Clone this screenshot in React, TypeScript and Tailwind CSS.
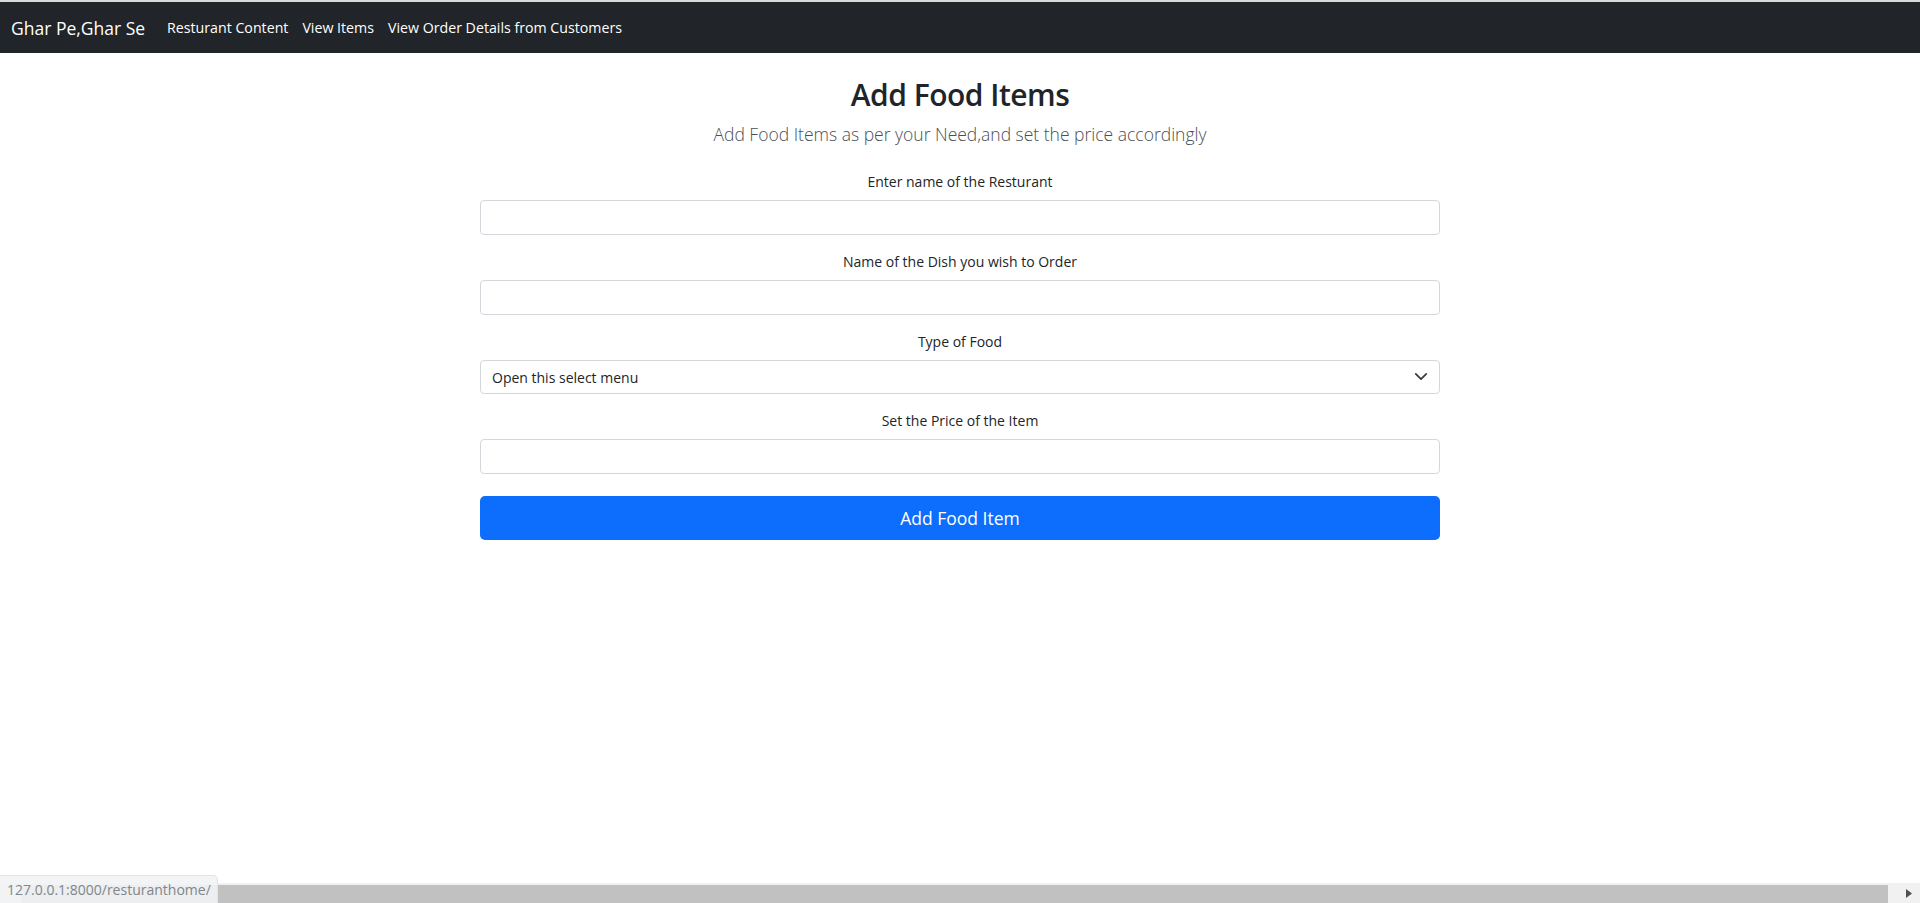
import React from "react";

function Field({ label, children }: { label: string; children: React.ReactNode }) {
  return (
    <div className="mb-[16px] flex flex-col">
      <label className="mb-[8px] block h-[21px] text-center text-[14px] leading-[21px] text-[#212529]">{label}</label>
      {children}
    </div>
  );
}

function TextInput() {
  return (
    <input
      type="text"
      className="box-border block h-[35px] w-full rounded-[4px] border border-[#d3d7dc] bg-white px-[11px] text-[14px] text-[#212529] outline-none"
    />
  );
}

export default function App() {
  return (
    <div
      className="relative flex h-[903px] w-full flex-col overflow-hidden bg-white"
      style={{ fontFamily: '"Open Sans", "Noto Sans", sans-serif' }}
    >
      <div className="h-[2px] w-full bg-[#dadada]" />
      <nav className="flex h-[51px] items-center bg-[#212529] pl-[11px] text-white">
        <span className="mr-[15px] text-[17.5px] leading-[26px] text-white">Ghar Pe,Ghar Se</span>
        <a className="px-[7px] text-[14.2px] leading-[21px] text-white">Resturant Content</a>
        <a className="px-[7px] text-[14.2px] leading-[21px] text-white">View Items</a>
        <a className="px-[7px] text-[14.2px] leading-[21px] text-white">View Order Details from Customers</a>
      </nav>

      <main className="flex-1">
        <div className="mx-auto w-[960px] pt-[24px]">
          <h2 className="text-center text-[30px] font-semibold leading-[36px] tracking-[-0.5px] text-[#212529]">
            Add Food Items
          </h2>
          <p className="mt-[8px] text-center text-[17.5px] font-light leading-[26px] text-[#495057]">
            Add Food Items as per your Need,and set the price accordingly
          </p>
          <form className="mt-[24px]">
            <Field label="Enter name of the Resturant">
              <TextInput />
            </Field>
            <Field label="Name of the Dish you wish to Order">
              <TextInput />
            </Field>
            <Field label="Type of Food">
              <div className="relative">
                <select className="box-border block h-[34px] w-full appearance-none rounded-[4px] border border-[#d3d7dc] bg-white pl-[11px] text-[14px] text-[#212529] outline-none">
                  <option>Open this select menu</option>
                  <option>Veg</option>
                  <option>Non-Veg</option>
                </select>
                <svg
                  className="pointer-events-none absolute right-[12px] top-[11px]"
                  width="14"
                  height="11"
                  viewBox="0 0 16 12"
                  fill="none"
                  stroke="#343a40"
                  strokeWidth="2"
                  strokeLinecap="round"
                  strokeLinejoin="round"
                >
                  <path d="M2 3l6 6 6-6" />
                </svg>
              </div>
            </Field>
            <Field label="Set the Price of the Item">
              <TextInput />
            </Field>
            <button
              type="button"
              className="mt-[22px] block h-[44px] w-full rounded-[5px] bg-[#0d6efd] text-center text-[17.5px] leading-[26px] text-white"
            >
              Add Food Item
            </button>
          </form>
        </div>
      </main>

      <div className="flex h-[20px] w-full bg-[#f1f1f1]">
        <div className="w-[21px]" />
        <div className="mt-[2px] h-[18px] flex-1 bg-[#c1c1c1]" />
        <div className="flex w-[32px] items-center justify-end pr-[8px]">
          <svg width="6" height="9" viewBox="0 0 6 9">
            <path d="M0 0L6 4.5L0 9Z" fill="#505050" />
          </svg>
        </div>
      </div>

      <div className="absolute bottom-0 left-0 flex h-[28px] w-[218px] items-center rounded-tr-[5px] border-r border-t border-[#e2e4e6] bg-[#f1f3f4]/90 pl-[7px] text-[14px] text-[#80868b]">
        127.0.0.1:8000/resturanthome/
      </div>
    </div>
  );
}
